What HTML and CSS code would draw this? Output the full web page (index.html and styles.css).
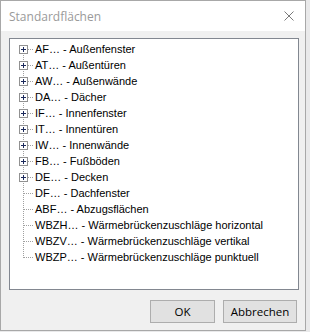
FILE: index.html
```html
<!DOCTYPE html>
<html lang="de">
<head>
<meta charset="utf-8">
<title>Standardflächen</title>
<link rel="stylesheet" href="styles.css">
</head>
<body>
<div class="window">
  <div class="titlebar">
    <span class="title">Standardflächen</span>
    <svg class="close" width="10" height="10" viewBox="0 0 10 10"><path d="M0.5 0.5 L9.5 9.5 M9.5 0.5 L0.5 9.5" stroke="#7a7a7a" stroke-width="1" fill="none"/></svg>
  </div>
  <div class="content">
    <div class="tree">
      <div class="row first"><span class="twig"><span class="plus"></span></span><span class="label">AF… - Außenfenster</span></div>
      <div class="row"><span class="twig"><span class="plus"></span></span><span class="label">AT… - Außentüren</span></div>
      <div class="row"><span class="twig"><span class="plus"></span></span><span class="label">AW… - Außenwände</span></div>
      <div class="row"><span class="twig"><span class="plus"></span></span><span class="label">DA… - Dächer</span></div>
      <div class="row"><span class="twig"><span class="plus"></span></span><span class="label">IF… - Innenfenster</span></div>
      <div class="row"><span class="twig"><span class="plus"></span></span><span class="label">IT… - Innentüren</span></div>
      <div class="row"><span class="twig"><span class="plus"></span></span><span class="label">IW… - Innenwände</span></div>
      <div class="row"><span class="twig"><span class="plus"></span></span><span class="label">FB… - Fußböden</span></div>
      <div class="row"><span class="twig"><span class="plus"></span></span><span class="label">DE… - Decken</span></div>
      <div class="row"><span class="twig"></span><span class="label">DF… - Dachfenster</span></div>
      <div class="row"><span class="twig"></span><span class="label">ABF… - Abzugsflächen</span></div>
      <div class="row"><span class="twig"></span><span class="label">WBZH… - Wärmebrückenzuschläge horizontal</span></div>
      <div class="row"><span class="twig"></span><span class="label">WBZV… - Wärmebrückenzuschläge vertikal</span></div>
      <div class="row last"><span class="twig"></span><span class="label">WBZP… - Wärmebrückenzuschläge punktuell</span></div>
    </div>
    <div class="buttons">
      <button class="btn btn-ok">OK</button>
      <button class="btn btn-cancel">Abbrechen</button>
    </div>
  </div>
</div>
</body>
</html>
```
FILE: styles.css
```css
html, body {
  margin: 0;
  padding: 0;
}
body {
  background: #e9e9ea;
  width: 310px;
  height: 332px;
  overflow: hidden;
}
.window {
  width: 304px;
  height: 329px;
  border: 1px solid #a8a8a8;
  background: #f0f0f0;
  display: flex;
  flex-direction: column;
}
.titlebar {
  height: 30px;
  background: #ffffff;
  display: flex;
  align-items: center;
  justify-content: space-between;
  padding: 0 11px 0 8px;
  flex: none;
}
.title {
  font-family: "Open Sans", "Noto Sans", sans-serif;
  font-size: 12px;
  color: #9a9a9a;
  margin-top: 0px;
}
.close {
  display: block;
  margin-top: -1px;
}
.content {
  flex: 1;
  display: flex;
  flex-direction: column;
  padding: 7px 6px 0 8px;
}
.tree {
  height: 248px;
  border: 1px solid #828790;
  background: #ffffff;
  padding-top: 2px;
  font-family: "Liberation Sans", Arial, sans-serif;
  font-size: 11px;
  color: #000;
}
.row {
  display: flex;
  height: 16px;
  align-items: center;
  line-height: 16px;
}
.twig {
  width: 24px;
  height: 16px;
  flex: none;
  display: flex;
  align-items: center;
  padding-left: 9px;
  box-sizing: border-box;
  background-image:
    repeating-linear-gradient(to bottom, #a0a0a0 0 1px, transparent 1px 2px),
    repeating-linear-gradient(to right, #a0a0a0 0 1px, transparent 1px 2px);
  background-size: 1px 16px, 9px 1px;
  background-position: 13px 0, 14px 8px;
  background-repeat: no-repeat;
}
.row.first .twig {
  background-size: 1px 8px, 9px 1px;
  background-position: 13px 8px, 14px 8px;
}
.row.last .twig {
  background-size: 1px 9px, 9px 1px;
  background-position: 13px 0, 14px 8px;
}
.plus {
  width: 9px;
  height: 9px;
  box-sizing: border-box;
  border: 1px solid #919191;
  background-color: #fff;
  background-image:
    linear-gradient(#1c2a5c, #1c2a5c),
    linear-gradient(#1c2a5c, #1c2a5c);
  background-size: 5px 1px, 1px 5px;
  background-position: 1px 3px, 3px 1px;
  background-repeat: no-repeat;
  margin-top: 1px;
}
.label {
  white-space: nowrap;
  padding-left: 1px;
}
.buttons {
  display: flex;
  justify-content: flex-end;
  gap: 8px;
  margin-top: 10px;
  padding-right: 2px;
}
.btn {
  height: 23px;
  background: #e1e1e1;
  border: 1px solid #adadad;
  font-family: "Open Sans", "Noto Sans", sans-serif;
  font-size: 11.5px;
  color: #000;
  padding: 0;
  margin: 0;
}
.btn-ok {
  width: 65px;
}
.btn-cancel {
  width: 74px;
}
```
